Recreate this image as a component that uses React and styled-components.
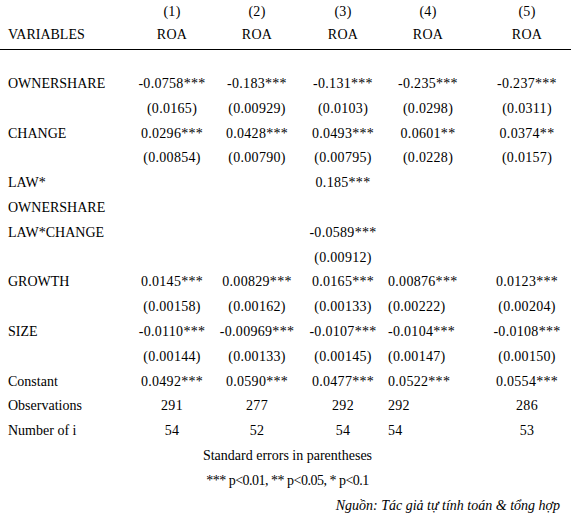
import React from 'react';
import styled, { createGlobalStyle } from 'styled-components';

const Global = createGlobalStyle`
  html, body { margin: 0; padding: 0; background: #fff; }
  body { font-family: "Liberation Serif", "Times New Roman", Times, serif; color: #000; }
`;

const Page = styled.div`
  width: 571px;
  height: 517px;
  overflow: hidden;
  background: #fff;
  display: flex;
  flex-direction: column;
  font-family: "Liberation Serif", "Times New Roman", Times, serif;
  color: #000;
`;

const Head = styled.div`
  border-bottom: 1px solid #000;
  padding-bottom: 3px;
`;

const Spacer = styled.div`
  height: 22px;
  flex: none;
`;

const Row = styled.div`
  display: grid;
  grid-template-columns: 130px 84px 86px 86px 84px 101px;
  font-size: 14px;
  line-height: ${(p) => p.$lh || 24.8}px;
  & > :nth-child(6) { padding-left: 13px; }
`;

const Label = styled.div`
  padding-left: 8px;
  text-align: left;
`;

const Cell = styled.div`
  white-space: nowrap;
  letter-spacing: 0.3px;
  text-align: ${(p) => (p.$left ? 'left' : 'center')};
  padding-left: ${(p) => (p.$left ? '2px' : '0')};
`;

const Note = styled.div`
  font-size: 14px;
  line-height: 24.8px;
  text-align: center;
  padding-left: 4px;
  letter-spacing: ${(p) => (p.$tight ? '-0.5px' : 'normal')};
`;

const Source = styled.div`
  font-size: 14px;
  line-height: 24.8px;
  text-align: right;
  font-style: italic;
  padding-right: 11px;
`;

const rows = [
  { label: 'OWNERSHARE', v: ['-0.0758***', '-0.183***', '-0.131***', '-0.235***', '-0.237***'] },
  { label: '', v: ['(0.0165)', '(0.00929)', '(0.0103)', '(0.0298)', '(0.0311)'] },
  { label: 'CHANGE', v: ['0.0296***', '0.0428***', '0.0493***', '0.0601**', '0.0374**'] },
  { label: '', v: ['(0.00854)', '(0.00790)', '(0.00795)', '(0.0228)', '(0.0157)'] },
  { label: 'LAW* OWNERSHARE', v: ['', '', '0.185***', '', ''] },
  { label: 'LAW*CHANGE', v: ['', '', '-0.0589***', '', ''] },
  { label: '', v: ['', '', '(0.00912)', '', ''] },
  { label: 'GROWTH', v: ['0.0145***', '0.00829***', '0.0165***', '0.00876***', '0.0123***'], left4: true },
  { label: '', v: ['(0.00158)', '(0.00162)', '(0.00133)', '(0.00222)', '(0.00204)'], left4: true },
  { label: 'SIZE', v: ['-0.0110***', '-0.00969***', '-0.0107***', '-0.0104***', '-0.0108***'], left4: true },
  { label: '', v: ['(0.00144)', '(0.00133)', '(0.00145)', '(0.00147)', '(0.00150)'], left4: true },
  { label: 'Constant', v: ['0.0492***', '0.0590***', '0.0477***', '0.0522***', '0.0554***'], left4: true },
  { label: 'Observations', v: ['291', '277', '292', '292', '286'], left4: true },
  { label: 'Number of i', v: ['54', '52', '54', '54', '53'], left4: true },
];

export default function App() {
  return (
    <Page>
      <Global />
      <Head>
        <Row $lh={23}>
          <Label />
          {['(1)', '(2)', '(3)', '(4)', '(5)'].map((t) => (
            <Cell key={t}>{t}</Cell>
          ))}
        </Row>
        <Row $lh={23}>
          <Label>VARIABLES</Label>
          {[1, 2, 3, 4, 5].map((i) => (
            <Cell key={i}>ROA</Cell>
          ))}
        </Row>
      </Head>
      <Spacer />
      {rows.map((r, i) => (
        <Row key={i}>
          <Label>{r.label}</Label>
          {r.v.map((t, j) => (
            <Cell key={j} $left={r.left4 && j === 3}>
              {t}
            </Cell>
          ))}
        </Row>
      ))}
      <Note>Standard errors in parentheses</Note>
      <Note $tight>*** p&lt;0.01, ** p&lt;0.05, * p&lt;0.1</Note>
      <Source>Nguồn: Tác giả tự tính toán &amp; tổng hợp</Source>
    </Page>
  );
}
